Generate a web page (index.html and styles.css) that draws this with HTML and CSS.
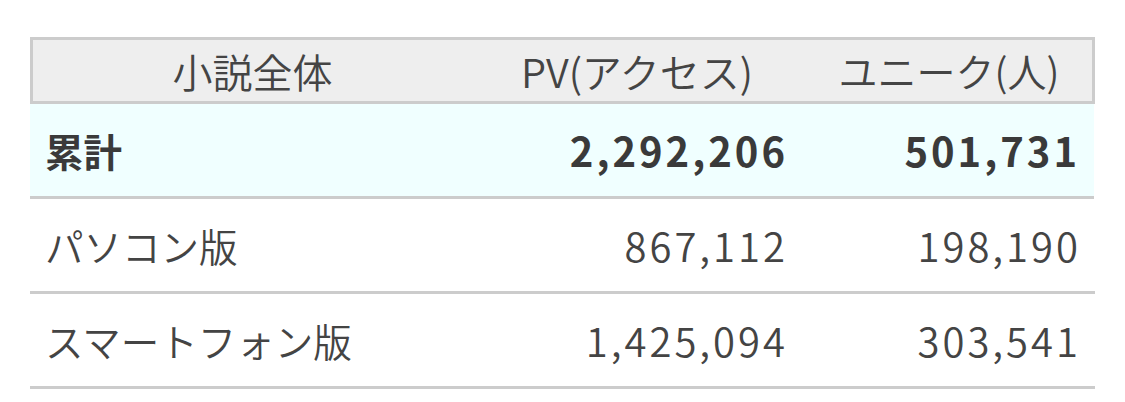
FILE: index.html
```html
<!DOCTYPE html>
<html lang="ja">
<head>
<meta charset="utf-8">
<link rel="stylesheet" href="styles.css">
</head>
<body>
<div class="stats">
  <div class="row head">
    <div class="cell c1">小説全体</div>
    <div class="cell c2">PV(アクセス)</div>
    <div class="cell c3">ユニーク(人)</div>
  </div>
  <div class="row total">
    <div class="cell label">累計</div>
    <div class="cell num">2,292,206</div>
    <div class="cell num">501,731</div>
  </div>
  <div class="row">
    <div class="cell label">パソコン版</div>
    <div class="cell num">867,112</div>
    <div class="cell num">198,190</div>
  </div>
  <div class="row">
    <div class="cell label">スマートフォン版</div>
    <div class="cell num">1,425,094</div>
    <div class="cell num">303,541</div>
  </div>
</div>
</body>
</html>
```
FILE: styles.css
```css
html, body {
  margin: 0;
  padding: 0;
  background: #fff;
}
body {
  font-family: "Noto Sans CJK JP", "Noto Sans", sans-serif;
  color: #444;
  font-size: 40px;
  font-weight: 350;
}
.stats {
  margin: 37px 0 0 30px;
  width: 1065px;
}
.row {
  display: grid;
  grid-template-columns: 442px 330px 1fr;
  height: 95px;
  box-sizing: border-box;
  border-bottom: 3px solid #ccc;
  align-items: center;
}
.head {
  height: 67px;
  border: 3px solid #ccc;
  background: #eeeeee;
  grid-template-columns: 439px 330px 1fr;
}
.head .cell {
  text-align: center;
}
.head .c3 {
  padding-left: 4px;
  font-size: 39px;
}
.total {
  background: #f0ffff;
  font-weight: 700;
  color: #3a3a3a;
  width: 1064px;
}
.cell {
  line-height: 1.2;
  white-space: nowrap;
}
.label {
  padding-left: 15px;
  font-size: 38.5px;
}
.num {
  text-align: right;
  padding-right: 14px;
  letter-spacing: 3px;
}
```
